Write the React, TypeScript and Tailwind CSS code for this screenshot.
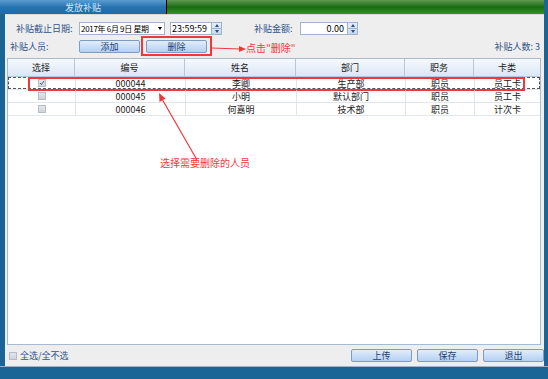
import React from 'react'

const font = { fontFamily: '"Noto Sans CJK SC", "Noto Sans", sans-serif' }

const rows = [
  { checked: true, code: '000044', name: '李卿', dept: '生产部', job: '职员', card: '员工卡' },
  { checked: false, code: '000045', name: '小明', dept: '默认部门', job: '职员', card: '员工卡' },
  { checked: false, code: '000046', name: '何嘉明', dept: '技术部', job: '职员', card: '计次卡' },
]

const cols = [
  { key: 'sel', title: '选择', w: 'w-[67px]' },
  { key: 'code', title: '编号', w: 'w-[110px]' },
  { key: 'name', title: '姓名', w: 'w-[111px]' },
  { key: 'dept', title: '部门', w: 'w-[109px]' },
  { key: 'job', title: '职务', w: 'w-[69px]' },
  { key: 'card', title: '卡类', w: 'flex-1' },
]

function Spinner() {
  return (
    <div className="w-[10px] h-full flex flex-col border-l border-[#9fb4cc] bg-gradient-to-b from-[#e6eefa] to-[#c6d7ee]">
      <div className="flex-1 flex items-center justify-center border-b border-[#9fb4cc]">
        <div className="w-0 h-0 border-l-[2.5px] border-r-[2.5px] border-b-[3px] border-l-transparent border-r-transparent border-b-[#2a4d7f]" />
      </div>
      <div className="flex-1 flex items-center justify-center">
        <div className="w-0 h-0 border-l-[2.5px] border-r-[2.5px] border-t-[3px] border-l-transparent border-r-transparent border-t-[#2a4d7f]" />
      </div>
    </div>
  )
}

function Btn({ label, className = '' }: { label: string; className?: string }) {
  return (
    <div className={`h-[13px] w-[61px] flex items-center justify-center rounded-[2px] border border-[#7d9cc4] bg-gradient-to-b from-[#e2edfb] to-[#b4d0f3] text-[9px] text-[#1f3f73] leading-none ${className}`}>
      {label}
    </div>
  )
}

function Check({ checked }: { checked?: boolean }) {
  return (
    <div className="w-[8px] h-[8px] border border-[#b6bcc4] bg-gradient-to-b from-[#e4e6ea] to-[#cfd3d9] flex items-center justify-center">
      {checked && (
        <svg width="6" height="6" viewBox="0 0 6 6">
          <path d="M1 3 L2.5 4.5 L5 1" stroke="#4a5a78" strokeWidth="1" fill="none" />
        </svg>
      )}
    </div>
  )
}

export default function App() {
  return (
    <div style={font} className="relative w-[548px] h-[379px] bg-[#1b6496] flex flex-col overflow-hidden">
      {/* Title bar */}
      <div className="h-[14px] flex pr-[4px]">
        <div className="w-[166px] bg-gradient-to-b from-[#5a9cd0] via-[#2774b0] to-[#1f6aa6] flex items-center justify-center text-[9px] text-[#d9e8f5] leading-none">
          发放补贴
        </div>
        <div className="w-[1px] bg-black" />
        <div className="flex-1 bg-gradient-to-b from-[#5d9a52] via-[#176c0c] to-[#2f9a22]" />
      </div>

      {/* Body */}
      <div className="flex-1 flex pl-[5px] pr-[4px]">
        <div className="flex-1 bg-[#eeeeee] border-t border-[#d8dcd8] flex flex-col text-[9px] leading-none">
          {/* Row 1 */}
          <div className="mt-[7px] h-[13px] flex items-center">
            <div className="ml-[11px] w-[63px] text-[#2f5488] whitespace-nowrap">补贴截止日期:</div>
            <div className="w-[86px] h-full bg-white border border-[#9fb4cc] flex items-center pl-[1px] text-black">
              <span className="flex-1 whitespace-pre text-[8px] tracking-[-0.3px]">2017年 6月 9日 星期</span>
              <div className="w-0 h-0 mr-[2px] border-l-[2.5px] border-r-[2.5px] border-t-[3px] border-l-transparent border-r-transparent border-t-black" />
            </div>
            <div className="ml-[5px] w-[52px] h-full bg-white border border-[#9fb4cc] flex items-center text-black">
              <span className="flex-1 pl-[1px] whitespace-nowrap">23:59:59</span>
              <Spinner />
            </div>
            <div className="ml-[32px] w-[46px] text-[#2f5488] whitespace-nowrap">补贴金额:</div>
            <div className="w-[58px] h-full bg-white border border-[#9fb4cc] flex items-center text-black">
              <span className="flex-1 text-right pr-[3px]">0.00</span>
              <Spinner />
            </div>
          </div>

          {/* Row 2 */}
          <div className="mt-[5px] h-[13px] flex items-center">
            <div className="ml-[5px] w-[69px] text-[#2f5488]">补贴人员:</div>
            <Btn label="添加" />
            <div className="relative ml-[6px]">
              <Btn label="删除" />
              <div className="absolute -left-[5px] -top-[4px] w-[71px] h-[20px] border-2 border-[#f0383c]" />
            </div>
            <div className="flex-1" />
            <div className="mr-[4px] text-[#2f5488] whitespace-pre">补贴人数: 3</div>
          </div>

          {/* Table */}
          <div className="mt-[5px] ml-[2px] w-[534px] h-[287px] bg-white border border-[#a9bad0] flex flex-col text-[#1a1a1a]">
            <div className="h-[18px] flex bg-gradient-to-b from-[#f5f9fe] to-[#dbe7f5] border-b border-[#b7c7da]">
              {cols.map((c, i) => (
                <div
                  key={c.key}
                  className={`${c.w} flex items-center justify-center ${i < cols.length - 1 ? 'border-r border-[#b7c7da]' : ''}`}
                >
                  {c.title}
                </div>
              ))}
            </div>
            {rows.map((r, ri) => (
              <div key={r.code} className="relative h-[13px] flex border-b border-[#e1e6ec]">
                <div className={`${cols[0].w} flex items-center justify-center`}>
                  <Check checked={r.checked} />
                </div>
                <div className={`${cols[1].w} flex items-center justify-center border-l border-[#e1e6ec]`}>{r.code}</div>
                <div className={`${cols[2].w} flex items-center justify-center border-l border-[#e1e6ec]`}>{r.name}</div>
                <div className={`${cols[3].w} flex items-center justify-center border-l border-[#e1e6ec]`}>{r.dept}</div>
                <div className={`${cols[4].w} flex items-center justify-center border-l border-[#e1e6ec]`}>{r.job}</div>
                <div className={`${cols[5].w} flex items-center justify-center border-l border-[#e1e6ec]`}>{r.card}</div>
                {ri === 0 && (
                  <>
                    <div className="absolute inset-0 border border-dashed border-[#555]" />
                    <div className="absolute left-[20px] top-0 w-[497px] h-[14px] border-2 border-[#f0383c]" />
                  </>
                )}
              </div>
            ))}
          </div>

          {/* Bottom row */}
          <div className="mt-[4px] h-[13px] flex items-center">
            <div className="ml-[4px]">
              <Check />
            </div>
            <div className="ml-[3px] text-[#2f5488]">全选/全不选</div>
            <div className="flex-1" />
            <Btn label="上传" />
            <Btn label="保存" className="ml-[5px]" />
            <Btn label="退出" className="ml-[5px]" />
          </div>
        </div>
      </div>

      {/* Bottom band */}
      <div className="h-[13px] border-t border-[#9ab4cc]" />

      {/* Annotations */}
      <svg className="absolute left-0 top-0 pointer-events-none" width="548" height="379">
        <line x1="211" y1="48" x2="241" y2="49" stroke="#f0383c" strokeWidth="1.2" />
        <polygon points="246,49 239,46 239,52" fill="#f0383c" />
        <line x1="197" y1="160" x2="162" y2="99" stroke="#f0383c" strokeWidth="1.2" />
        <polygon points="159,93 159.5,102 165.5,98.5" fill="#f0383c" />
      </svg>
      <div className="absolute left-[246px] top-[43px] text-[10px] leading-none text-[#f0383c] whitespace-nowrap">点击"删除"</div>
      <div className="absolute left-[160px] top-[158px] text-[10px] leading-none text-[#f0383c] whitespace-nowrap">选择需要删除的人员</div>
    </div>
  )
}
